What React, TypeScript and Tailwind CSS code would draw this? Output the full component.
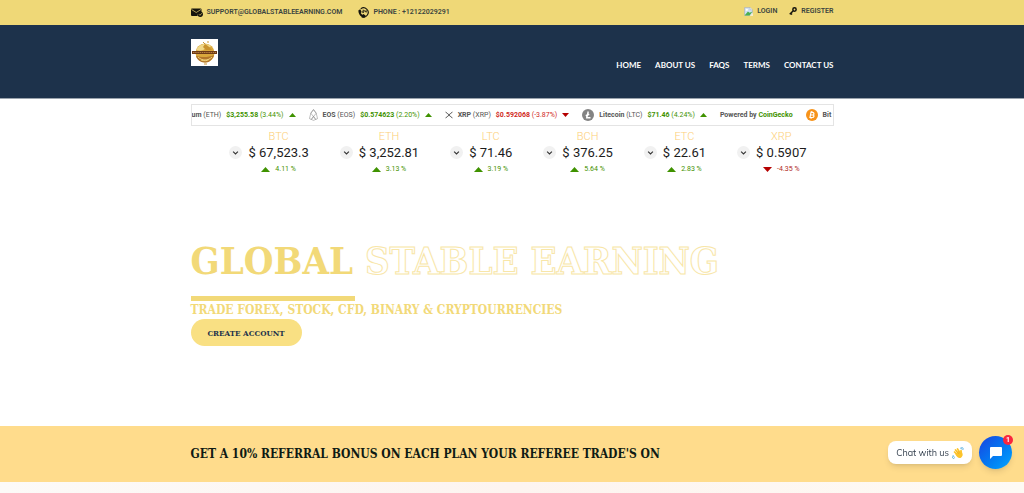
import type { ReactNode } from "react";

const slab = "font-['Roboto_Slab','DejaVu_Serif_Condensed','DejaVu_Serif',serif]";
const container = "mx-auto w-full max-w-[643px]";

function Triangle({ up, wide }: { up: boolean; wide?: boolean }) {
  return (
    <svg
      viewBox="0 0 8 4"
      className={wide ? "h-[5px] w-[9px] shrink-0" : "h-[4px] w-[7px] shrink-0"}
      preserveAspectRatio="none"
      aria-hidden="true"
    >
      <path d={up ? "M0 4 4 0l4 4z" : "M0 0h8L4 4z"} fill={up ? "#3f9200" : "#b50000"} />
    </svg>
  );
}

function MailIcon() {
  return (
    <svg viewBox="0 0 24 18" className="h-[9px] w-[12px]" aria-hidden="true">
      <path d="M2 1h17a2 2 0 0 1 2 2v5a7 7 0 0 0-8 8H2a2 2 0 0 1-2-2V3a2 2 0 0 1 2-2z" fill="#15140d" />
      <path d="M1 3l9.500 6L20 3" fill="none" stroke="#efd877" strokeWidth="1.400" />
      <circle cx="18.500" cy="12.500" r="5.300" fill="#15140d" />
      <path d="M16 12.500l2 2 3.500-4" fill="none" stroke="#efd877" strokeWidth="1.400" />
    </svg>
  );
}

function PhoneIcon() {
  return (
    <svg viewBox="0 0 24 24" className="size-[11px]" aria-hidden="true">
      <path d="M6 4a10 10 0 1 1 2 17" fill="none" stroke="#15140d" strokeWidth="2.500" />
      <path d="M1 7l4-2 3 6-2 2c1 2 2 3 4 4l2-2 5 4-2 4C8 24 0 16 1 7z" fill="#15140d" />
      <path d="M10 7h3v2.500h-3V12h3M15 7v3h3M18 7v5" fill="none" stroke="#15140d" strokeWidth="1.700" />
    </svg>
  );
}

function KeyIcon() {
  return (
    <svg viewBox="0 0 16 16" className="size-[8px]" aria-hidden="true">
      <circle cx="11" cy="5" r="3.300" fill="none" stroke="#15140d" strokeWidth="3" />
      <path d="M8.500 7.500 1.500 14.500M3 12l3 3" stroke="#15140d" strokeWidth="3" />
    </svg>
  );
}

function MissingImageIcon() {
  return (
    <svg viewBox="0 0 16 16" className="size-[9px]" aria-hidden="true">
      <path d="M1 1h10l4 4v10H1z" fill="#cfe0f5" stroke="#a5adb5" />
      <path d="M11 1v4h4" fill="#fff" stroke="#a5adb5" />
      <circle cx="5" cy="5" r="2" fill="#fff" />
      <path d="M1 15l6-7 3 2 5-2-5 7z" fill="#4caf50" />
      <path d="M10 16l6-6v6z" fill="#f7efcb" />
    </svg>
  );
}

function Logo() {
  return (
    <svg viewBox="0 0 27 27" className="size-[27px]" role="img" aria-label="Global Stable Earning">
      <rect width="27" height="27" fill="#fff" />
      <circle cx="14" cy="14" r="9.500" fill="#d9a83c" />
      <path d="M5.500 11c2-6 9-8 15-4-2 2-5 1-7 3s-5 2-8 1z" fill="#f0d788" />
      <path d="M14 5l3 2 4 4h-6l-3-3z" fill="#c8922e" />
      <path d="M5 17c4 1 12 2 18-1-1 4-5 8-9 7.500-5 0-8-3-9-6.500z" fill="#b2762a" />
      <path d="M7 18c4 4 10 4 14 0M10 21c3 1 6 1 8-.5" fill="none" stroke="#f0d27b" />
      <path d="M12 3l2 2M17 2v2M13 25h3" stroke="#c99432" />
      <rect x="1" y="12" width="25" height="3" fill="#6d3b17" />
      <path d="M2 13.500h23" stroke="#c9924f" strokeDasharray="1.500 .7" strokeWidth=".8" />
    </svg>
  );
}

function EosIcon() {
  return (
    <svg viewBox="0 0 20 26" className="h-[12px] w-[9px]" fill="none" stroke="#888" strokeWidth="1.200" aria-hidden="true">
      <path d="M10 1 4 9 1 21l9 4 9-4L16 9zM4 9l11 14M16 9 5 23M10 1l-6 8M10 1l6 8M5 23l5-7 5 7" />
    </svg>
  );
}

function XrpIcon() {
  return (
    <svg viewBox="0 0 16 16" className="size-[8px]" fill="none" stroke="#444" strokeWidth="1.800" aria-hidden="true">
      <path d="M1 1.500 5.500 6a3.500 3.500 0 0 0 5 0L15 1.500M1 14.500 5.500 10a3.500 3.500 0 0 1 5 0l4.500 4.500" />
    </svg>
  );
}

function LtcIcon() {
  return (
    <svg viewBox="0 0 24 24" className="size-[12px]" aria-hidden="true">
      <circle cx="12" cy="12" r="12" fill="#838383" />
      <path d="M12.500 5 9.500 17.500H17M7.500 13.500l7-3" fill="none" stroke="#fff" strokeWidth="2.800" />
    </svg>
  );
}

function BtcIcon() {
  return (
    <svg viewBox="0 0 24 24" className="size-[12px]" aria-hidden="true">
      <circle cx="12" cy="12" r="12" fill="#f7931a" />
      <path
        d="M10 6.500 8 17h4.500c4 0 4.500-4.500 1.500-5 3-1 2.500-5-1-5.300zM9.300 12H14M12 4.500l-.5 2M10.500 17l-.5 2.500"
        fill="none"
        stroke="#fff"
        strokeWidth="2.400"
      />
    </svg>
  );
}

function WaveIcon() {
  return (
    <svg viewBox="0 0 24 24" className="size-[12px]" aria-hidden="true">
      <g stroke="#fcc42c" strokeLinecap="round" strokeWidth="3.400">
        <path d="M5 10l7 7M7 6l8 9M11 4l6 9M18 7l1 9" />
      </g>
      <path d="M6 13l10-4 4 2c2 4 1 9-3 11-4 1-7-1-11-9z" fill="#fcc42c" />
      <path d="M9 9l5 5M12 8l4 5" stroke="#e59c1c" strokeWidth=".8" />
      <path d="M16 2q4 0 5 4M18 0q5 1 5 5M2 16q0 4 4 5M0 18q0 5 5 6" fill="none" stroke="#4da9dc" strokeWidth="1.500" />
    </svg>
  );
}

interface TickerProps {
  icon?: ReactNode;
  name: string;
  symbol: string;
  price: string;
  change: string;
  up: boolean;
}

function TickerItem({ icon, name, symbol, price, change, up }: TickerProps) {
  return (
    <li className="flex shrink-0 items-center gap-[5px]">
      {icon}
      <span className="text-[#555]">
        <b className="font-bold">{name}</b> ({symbol})
      </span>
      <span className={up ? "text-[#3f9200]" : "text-[#d0281c]"}>
        <b className="font-bold">{price}</b> ({change})
      </span>
      <Triangle up={up} />
    </li>
  );
}

const coins = [
  { symbol: "BTC", price: "67,523.3", change: "4.11", up: true },
  { symbol: "ETH", price: "3,252.81", change: "3.13", up: true },
  { symbol: "LTC", price: "71.46", change: "3.19", up: true },
  { symbol: "BCH", price: "376.25", change: "5.64", up: true },
  { symbol: "ETC", price: "22.61", change: "2.83", up: true },
  { symbol: "XRP", price: "0.5907", change: "-4.35", up: false },
];

const links = ["HOME", "ABOUT US", "FAQS", "TERMS", "CONTACT US"];

export default function App() {
  return (
    <div className="flex min-h-screen flex-col overflow-x-hidden bg-white font-[Roboto,sans-serif]">
      <div className="bg-[#efd877] text-[7px] leading-[9px] font-semibold text-[#3a4440]">
        <div className={`${container} flex h-[25px] items-center justify-between`}>
          <div className="flex items-center gap-4">
            <a href="mailto:support@globalstableearning.com" className="flex items-center gap-1">
              <MailIcon />
              SUPPORT@GLOBALSTABLEEARNING.COM
            </a>
            <a href="tel:+12122029291" className="flex items-center gap-1">
              <PhoneIcon />
              PHONE : +12122029291
            </a>
          </div>
          <div className="flex items-center gap-3 pb-[3px]">
            <a href="#login" className="flex items-center gap-1">
              <MissingImageIcon />
              LOGIN
            </a>
            <a href="#register" className="flex items-center gap-1">
              <KeyIcon />
              REGISTER
            </a>
          </div>
        </div>
      </div>

      <header className="border-b border-[#9aa3ad] bg-[#1d324b]">
        <div className={`${container} flex h-[73px] items-start justify-between pt-[14px]`}>
          <a href="#home">
            <Logo />
          </a>
          <nav className="pt-5">
            <ul className="flex gap-[14px] font-[Lato,sans-serif] text-[8px] leading-[12px] font-bold text-white">
              {links.map((link) => (
                <li key={link}>
                  <a href="#menu">{link}</a>
                </li>
              ))}
            </ul>
          </nav>
        </div>
      </header>

      <main className="flex grow flex-col">
        <section className={`${container} pt-[5px]`}>
          <ul className="flex h-[22px] items-center gap-[13px] overflow-hidden border border-[#e4e4e4] text-[7px] leading-[9px] whitespace-nowrap">
            <TickerItem name="um" symbol="ETH" price="$3,255.58" change="3.44%" up />
            <TickerItem icon={<EosIcon />} name="EOS" symbol="EOS" price="$0.574623" change="2.20%" up />
            <TickerItem icon={<XrpIcon />} name="XRP" symbol="XRP" price="$0.592068" change="-3.87%" up={false} />
            <TickerItem icon={<LtcIcon />} name="Litecoin" symbol="LTC" price="$71.46" change="4.24%" up />
            <li className="shrink-0 font-bold text-[#555]">
              Powered by{" "}
              <a href="#coingecko" className="text-[#3f9200]">
                CoinGecko
              </a>
            </li>
            <li className="flex shrink-0 items-center gap-[5px] font-bold text-[#555]">
              <BtcIcon />
              Bit
            </li>
          </ul>

          <ul className="flex flex-wrap justify-center gap-[31px] pt-[3px] pl-3">
            {coins.map((coin) => (
              <li key={coin.symbol} className="flex items-center gap-[6px]">
                <button
                  type="button"
                  aria-label={`${coin.symbol} options`}
                  className="flex size-[13px] items-center justify-center rounded-full bg-[#f1f1f1]"
                >
                  <svg viewBox="0 0 8 5" className="h-[4px] w-[7px]" fill="none" stroke="#333" strokeWidth="1.400" aria-hidden="true">
                    <path d="M1 .7l3 3 3-3" />
                  </svg>
                </button>
                <div className="text-center">
                  <div className="text-[11px] leading-[15px] font-light text-[#fdcf78]">{coin.symbol}</div>
                  <div className="text-[13px] leading-[18px] text-[#1c1c1c]">$ {coin.price}</div>
                  <div
                    className={`flex items-center justify-center gap-[5px] text-[7px] leading-[14px] ${coin.up ? "text-[#3f9200]" : "text-[#b0281c]"}`}
                  >
                    <Triangle up={coin.up} wide />
                    {coin.change} %
                  </div>
                </div>
              </li>
            ))}
          </ul>
        </section>

        <section className={`${container} flex flex-col items-start pt-[60px] pb-20 ${slab}`}>
          <h1 className="text-[38px] leading-[50px] font-bold text-[#f2d978]">
            GLOBAL{" "}
            <span className="text-white [-webkit-text-stroke:1px_#f8e6a8]">STABLE EARNING</span>
          </h1>
          <div className="mt-[10px] h-[5px] w-[164px] bg-[#f2d978]" />
          <p className="text-[12px] leading-[18px] font-bold text-[#f2d978]">
            TRADE FOREX, STOCK, CFD, BINARY &amp; CRYPTOURRENCIES
          </p>
          <a
            href="#register"
            className="flex h-[27px] w-[111px] items-center justify-center rounded-full bg-[#f9e083] text-[8px] font-bold text-[#1d324b]"
          >
            CREATE ACCOUNT
          </a>
        </section>

        <section className="bg-[#ffdc8c]">
          <div className={`${container} py-[18px]`}>
            <h2 className={`text-[12px] leading-[20px] font-bold text-[#0e1a14] ${slab}`}>
              GET A 10% REFERRAL BONUS ON EACH PLAN YOUR REFEREE TRADE'S ON
            </h2>
          </div>
        </section>
        <div className="min-h-[10px] grow bg-linear-to-r from-[#fcfaf8] via-[#fdf4f0] to-[#fefaf4]" />
      </main>

      <aside className="fixed right-3 bottom-6 flex items-center gap-[7px]">
        <div className="flex h-[23px] items-center gap-[3px] rounded-[8px] bg-white px-2 font-['Mulish','Open_Sans',sans-serif] text-[9px] text-[#333f4d] shadow-md">
          Chat with us
          <WaveIcon />
        </div>
        <button
          type="button"
          aria-label="Open chat"
          className="relative flex size-[33px] items-center justify-center rounded-full bg-linear-to-br from-[#1a3fe0] to-[#0aa5ff] shadow-md"
        >
          <svg viewBox="0 0 12 12" className="size-[12px]" aria-hidden="true">
            <path d="M1 0h10a1 1 0 0 1 1 1v7a1 1 0 0 1-1 1H3l-3 3V1a1 1 0 0 1 1-1z" fill="#fff" />
          </svg>
          <span className="absolute -top-px -right-px flex size-[10px] items-center justify-center rounded-full bg-[#f9263e] text-[7px] leading-none font-bold text-white">
            1
          </span>
        </button>
      </aside>
    </div>
  );
}
